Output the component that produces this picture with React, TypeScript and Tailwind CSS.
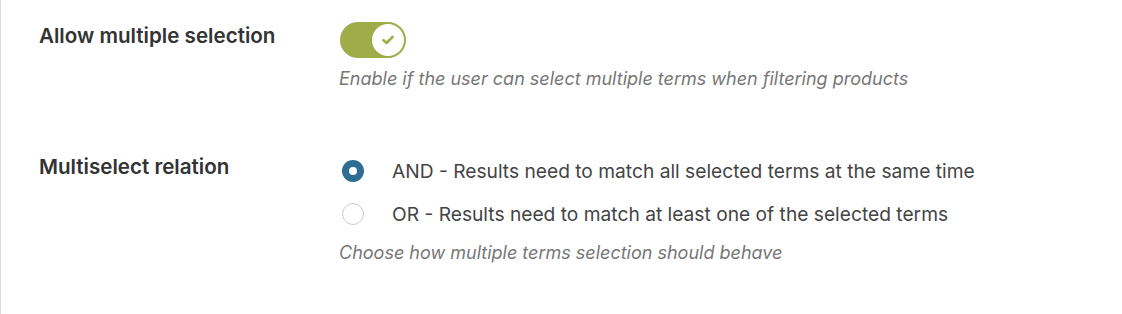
export default function App() {
  return (
    <div className="h-[314px] w-[1122px] bg-white border-l border-[#dcdcdc] font-['Inter','Liberation_Sans',sans-serif]">
      <div className="flex pt-[22px]">
        <div className="w-[338px] shrink-0 pl-[38px] pt-[1px] text-[20.6px] leading-[26px] font-semibold text-[#333]">
          Allow multiple selection
        </div>
        <div className="flex flex-col">
          <div className="pl-[1px]">
            <div className="flex h-[36px] w-[66px] items-center justify-end rounded-full bg-[#9ead4a] pr-[2px]">
              <div className="flex h-[32px] w-[32px] items-center justify-center rounded-full bg-white">
                <svg width="12" height="10" viewBox="0 0 12 10" fill="none">
                  <path d="M1.5 5.2 4.5 8 10.5 2" stroke="#9ead4a" strokeWidth="2.6" strokeLinecap="round" strokeLinejoin="round" />
                </svg>
              </div>
            </div>
          </div>
          <p className="mt-[10px] text-[18px] leading-[22px] italic text-[#777]">
            Enable if the user can select multiple terms when filtering products
          </p>
        </div>
      </div>

      <div className="flex pt-[64px]">
        <div className="w-[338px] shrink-0 pl-[38px] text-[20.6px] leading-[26px] font-semibold text-[#333]">
          Multiselect relation
        </div>
        <div className="flex flex-col pt-[6px]">
          <label className="flex h-[22px] items-center">
            <span className="ml-[3px] flex h-[22px] w-[22px] items-center justify-center rounded-full bg-[#2e6e95]">
              <span className="h-[8px] w-[8px] rounded-full bg-white" />
            </span>
            <span className="ml-[28px] text-[19.2px] leading-[22px] text-[#444]">
              AND - Results need to match all selected terms at the same time
            </span>
          </label>
          <label className="mt-[21px] flex h-[22px] items-center">
            <span className="ml-[3px] h-[22px] w-[22px] rounded-full border border-[#ccc] bg-white" />
            <span className="ml-[28px] text-[19.2px] leading-[22px] text-[#444]">
              OR - Results need to match at least one of the selected terms
            </span>
          </label>
          <p className="mt-[17px] text-[18px] leading-[22px] italic text-[#777]">
            Choose how multiple terms selection should behave
          </p>
        </div>
      </div>
    </div>
  );
}
